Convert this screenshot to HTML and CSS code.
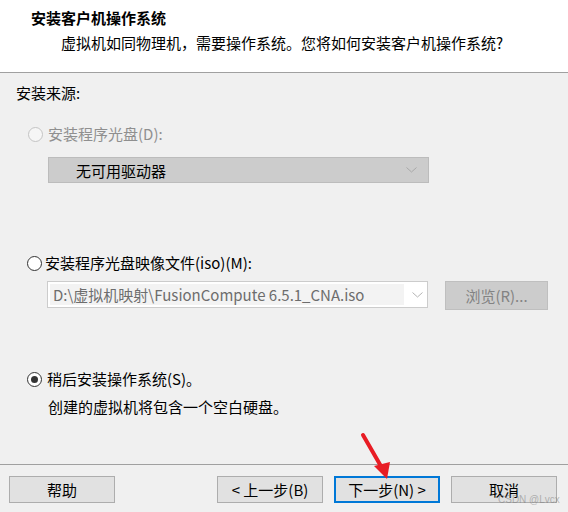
FILE: index.html
```html
<!DOCTYPE html>
<html lang="zh-CN">
<head>
    <meta charset="UTF-8">
    <title>新建虚拟机向导</title>
    <link rel="stylesheet" href="styles.css">
</head>
<body>
    <div class="wizard">
        <div class="wizard-header">
            <div class="wizard-title">安装客户机操作系统</div>
            <div class="wizard-subtitle">虚拟机如同物理机，需要操作系统。您将如何安装客户机操作系统?</div>
        </div>

        <div class="wizard-body">
            <div class="section-label">安装来源:</div>

            <div class="option option-disc disabled">
                <span class="radio"></span>
                <span>安装程序光盘(D):</span>
            </div>
            <div class="select-disabled">
                <span>无可用驱动器</span>
                <svg class="chevron" width="11" height="6" viewBox="0 0 11 6">
                    <polyline points="0.5,0.5 5.5,5 10.5,0.5" fill="none" stroke="#a8a8a8" stroke-width="1"/>
                </svg>
            </div>

            <div class="option option-iso">
                <span class="radio"></span>
                <span>安装程序光盘映像文件(iso)(M):</span>
            </div>
            <div class="iso-row">
                <div class="combo">
                    <span class="combo-text">D:\虚拟机映射\FusionCompute 6.5.1_CNA.iso</span>
                    <svg class="chevron" width="11" height="6" viewBox="0 0 11 6">
                        <polyline points="0.5,0.5 5.5,5 10.5,0.5" fill="none" stroke="#b4b4b4" stroke-width="1"/>
                    </svg>
                </div>
                <button class="btn btn-disabled" disabled>浏览(R)...</button>
            </div>

            <div class="option option-later">
                <span class="radio checked"></span>
                <span>稍后安装操作系统(S)。</span>
            </div>
            <div class="hint">创建的虚拟机将包含一个空白硬盘。</div>
        </div>

        <div class="wizard-footer">
            <button class="btn">帮助</button>
            <div class="footer-right">
                <button class="btn">&lt; 上一步(B)</button>
                <button class="btn btn-focus">下一步(N) &gt;</button>
                <button class="btn">取消</button>
            </div>
        </div>

        <!-- 截图上的标注箭头 -->
        <svg class="mark-arrow" width="40" height="50" viewBox="0 0 40 50">
            <line x1="3" y1="3" x2="22" y2="36" stroke="#e81c24" stroke-width="4" stroke-linecap="round"/>
            <polygon points="14,34 30,30 27,47" fill="#e81c24"/>
        </svg>
        <div class="watermark">CSDN @Lvcx</div>
    </div>
</body>
</html>
```

FILE: styles.css
```css
* {
    box-sizing: border-box;
}

body {
    margin: 0;
    font-family: "Noto Sans CJK SC", "Noto Sans", sans-serif;
    font-size: 15px;
    color: #000;
}

.wizard {
    position: relative;
    width: 568px;
    height: 512px;
    background: #f0f0f0;
    display: flex;
    flex-direction: column;
    overflow: hidden;
}

.wizard-header {
    height: 73px;
    background: #fff;
    border-bottom: 1px solid #a0a0a0;
    padding-top: 8px;
}

.wizard-title {
    padding-left: 31px;
    font-weight: bold;
    line-height: 20px;
}

.wizard-subtitle {
    padding-left: 61px;
    margin-top: 5px;
    line-height: 20px;
}

.wizard-body {
    flex: 1;
}

.section-label {
    margin-top: 10px;
    padding-left: 16px;
    line-height: 20px;
}

.option {
    display: flex;
    align-items: center;
    gap: 5px;
    line-height: 20px;
}

.option-disc {
    margin-top: 21px;
    padding-left: 28px;
}

.option-iso {
    margin-top: 70px;
    padding-left: 27px;
    gap: 3px;
}

.option-later {
    margin-top: 59px;
    padding-left: 27px;
}

.disabled {
    color: #8f8f8f;
}

.radio {
    width: 15px;
    height: 15px;
    border: 1px solid #333;
    border-radius: 50%;
    background: #fff;
    display: flex;
    align-items: center;
    justify-content: center;
}

.disabled .radio {
    border-color: #c4c4c4;
    background: #f6f6f6;
}

.radio.checked::after {
    content: "";
    width: 7px;
    height: 7px;
    border-radius: 50%;
    background: #333;
}

.select-disabled {
    margin: 13px 0 0 48px;
    width: 381px;
    height: 26px;
    background: #ccc;
    border: 1px solid #bcbcbc;
    display: flex;
    align-items: center;
    justify-content: space-between;
    padding: 0 11px 0 27px;
}

.iso-row {
    display: flex;
    align-items: flex-start;
    margin: 8px 0 0 47px;
    gap: 17px;
}

.combo {
    width: 381px;
    height: 27px;
    background: #fff;
    border: 1px solid #ccc;
    display: flex;
    align-items: center;
    padding: 2px;
}

.combo-text {
    width: 354px;
    height: 100%;
    background: #f3f3f3;
    color: #6d6d6d;
    padding-left: 3px;
    line-height: 21px;
    white-space: nowrap;
    overflow: hidden;
}

.combo .chevron {
    margin-left: 8px;
}

.hint {
    margin-top: 8px;
    padding-left: 48px;
    line-height: 20px;
}

.wizard-footer {
    height: 48px;
    border-top: 1px solid #a0a0a0;
    display: flex;
    justify-content: space-between;
    align-items: flex-start;
    padding: 11px 11px 0 9px;
}

.footer-right {
    display: flex;
    gap: 11px;
}

.btn {
    width: 106px;
    height: 27px;
    background: #e1e1e1;
    border: 1px solid #adadad;
    font-family: inherit;
    font-size: 15px;
    color: #000;
    padding: 0;
    line-height: 23px;
}

.btn-focus {
    border: 2px solid #0078d7;
}

.btn-disabled {
    width: 103px;
    height: 29px;
    background: #ccc;
    border-color: #bfbfbf;
    color: #838383;
}

.mark-arrow {
    position: absolute;
    left: 360px;
    top: 432px;
}

.watermark {
    position: absolute;
    left: 498px;
    top: 494px;
    font-family: "Liberation Sans", sans-serif;
    font-size: 10px;
    line-height: 12px;
    color: rgba(120, 120, 120, 0.5);
}
```
